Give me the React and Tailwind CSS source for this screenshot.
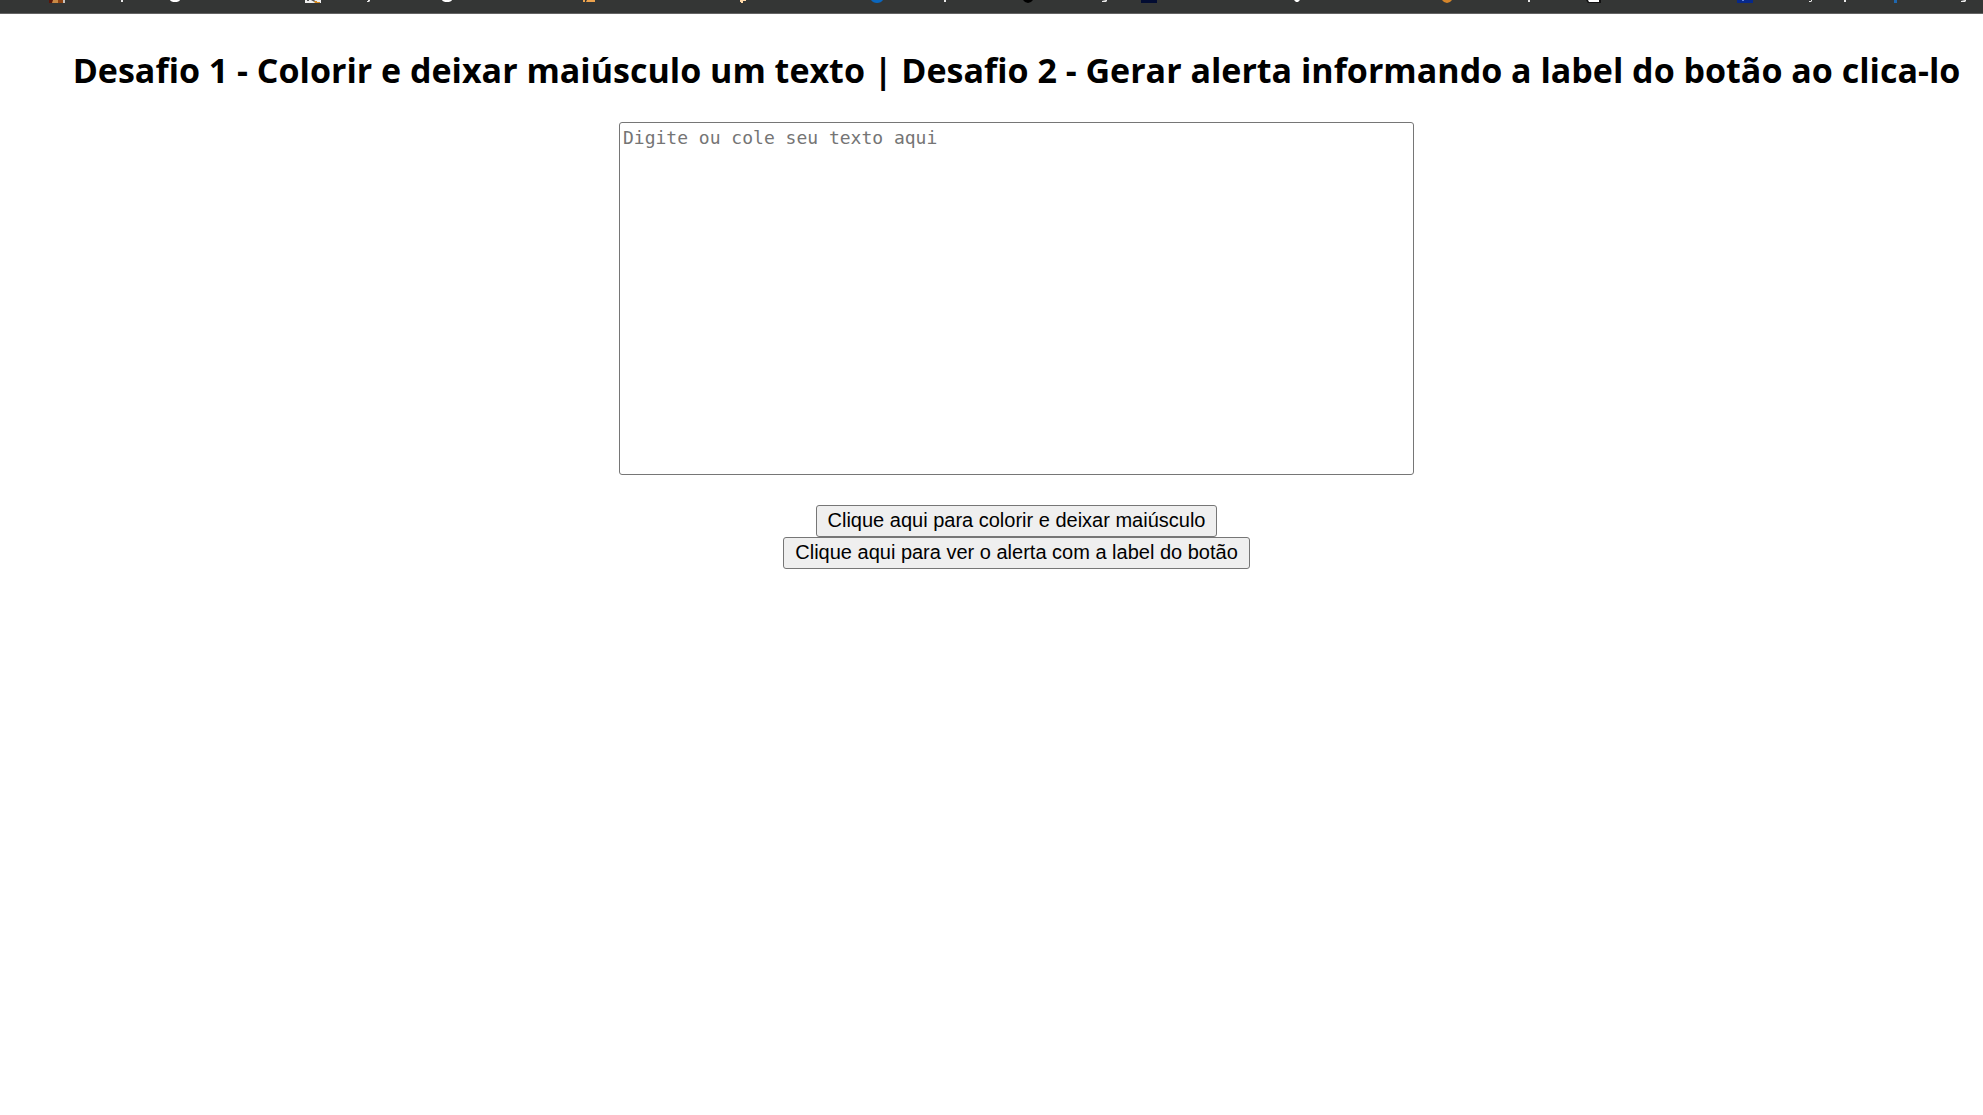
import React, { useState } from "react";

const bookmarks = [
  { width: "w-[114px]", art: <><path fill="#5a1508" d="M0 0h5v3H0z" /><path fill="#c98a45" d="M4 0h7v3H3z" /><path fill="#8d4312" d="M9 0h5v3H9z" /><path fill="#c9c4c0" d="M14 0h2v3h-2z" /><path fill="#e8e8e8" d="M72 0h2v2h-2z" /></> },
  { width: "w-[142px]", art: <path fill="#fff" d="M7 0h10q-1 2-5 2T7 0z" /> },
  { width: "w-[131px]", art: <><path fill="#eee" d="M0 0h16v3H0z" /><path fill="#555" d="M2 0h2v1H2zm4 0h3l4 3h-2z" /><path fill="#d48a20" d="M9 1h3v1h3v1H10z" /><path fill="#e8e8e8" d="M62 1h1V0h2v1l-1 1h-2z" /></> },
  { width: "w-[143px]", art: <path fill="#fff" d="M6 0h10q-1 2-5 2T6 0z" /> },
  { width: "w-[159px]", art: <path fill="#eda34d" d="M4 0h2v2H4zm4 0h8v2H7z" /> },
  { width: "w-[130px]", art: <path fill="#ffd9a8" d="M2 0h6v1H5v2H3V2H2z" /> },
  { width: "w-[150px]", art: <><path fill="#0a66bd" d="M3 0h12q-2 3-6 3T3 0z" /><path fill="#e8e8e8" d="M76 0h2v2h-2z" /></> },
  { width: "w-[122px]", art: <><path fill="#000" d="M5 0h10q-2 3-5 3T5 0z" /><path fill="#e8e8e8" d="M84 0h5v1l-1 1h-4V1h4z" /></> },
  { width: "w-[149px]", art: <path fill="#020c32" d="M1 0h16v3H1z" /> },
  { width: "w-[150px]", art: <path fill="#fff" d="M5 0h6L9 2H7z" /> },
  { width: "w-[147px]", art: <><path fill="#d5852a" d="M3 0h10q-2 3-5 3T3 0z" /><path fill="#e8e8e8" d="M89 0h2v2h-2z" /></> },
  { width: "w-[151px]", art: <><path fill="#111" d="M0 0h15v3H2z" /><path fill="#fff" d="M2 0h11v2H3z" /></> },
  { width: "w-[148px]", art: <><path fill="#06288a" d="M0 0h16v3H0z" /><path fill="#5d82dc" d="M5 0h2v1H5z" /><path fill="#e8e8e8" d="M72 1h2V0h1v1l-1 1h-2zM107 0h2v2h-2z" /></> },
  { width: "w-[91px]", art: <><path fill="#1f67ae" d="M9 0h3v3H9z" /><path fill="#e8e8e8" d="M76 0h5v1l-1 1h-4V1h4z" /></> },
];

export default function App() {
  const [text, setText] = useState("");
  const [styled, setStyled] = useState(false);

  return (
    <div className="min-h-screen bg-white text-black">
      <header className="flex h-[14px] overflow-hidden border-b border-[#646464] bg-[#343635] pl-[49px]" aria-hidden="true">
        {bookmarks.map((b, i) => (
          <svg key={i} className={`${b.width} h-1 shrink-0`}>{b.art}</svg>
        ))}
      </header>
      <main className="flex flex-col items-center pt-[30px] pl-[50px]">
        <h1 className="text-center font-['Open_Sans',sans-serif] text-[34px] leading-[52px] font-bold whitespace-nowrap">
          Desafio 1 - Colorir e deixar maiúsculo um texto | Desafio 2 - Gerar alerta informando a label do botão ao clica-lo
        </h1>
        <textarea
          aria-label="Digite ou cole seu texto aqui"
          placeholder="Digite ou cole seu texto aqui"
          value={text}
          onChange={(e) => setText(e.target.value)}
          className={`mt-[26px] h-[353px] w-full max-w-[795px] resize-none rounded-[3px] border border-[#767676] bg-white p-[3px] font-['DejaVu_Sans_Mono',monospace] text-[18px] leading-6 placeholder:text-[#757575] ${styled ? "text-blue-600 uppercase" : ""}`}
        />
        <div className="mt-[30px] flex flex-col items-center font-['Liberation_Sans',sans-serif] text-[20px] leading-6">
          <button type="button" onClick={() => setStyled(true)} className="h-8 rounded-[3px] border border-[#767676] bg-[#efefef] px-[11px] pb-[2px]">
            Clique aqui para colorir e deixar maiúsculo
          </button>
          <button type="button" onClick={(e) => alert(e.currentTarget.textContent)} className="h-8 rounded-[3px] border border-[#767676] bg-[#efefef] px-[11px] pb-[2px]">
            Clique aqui para ver o alerta com a label do botão
          </button>
        </div>
      </main>
    </div>
  );
}
